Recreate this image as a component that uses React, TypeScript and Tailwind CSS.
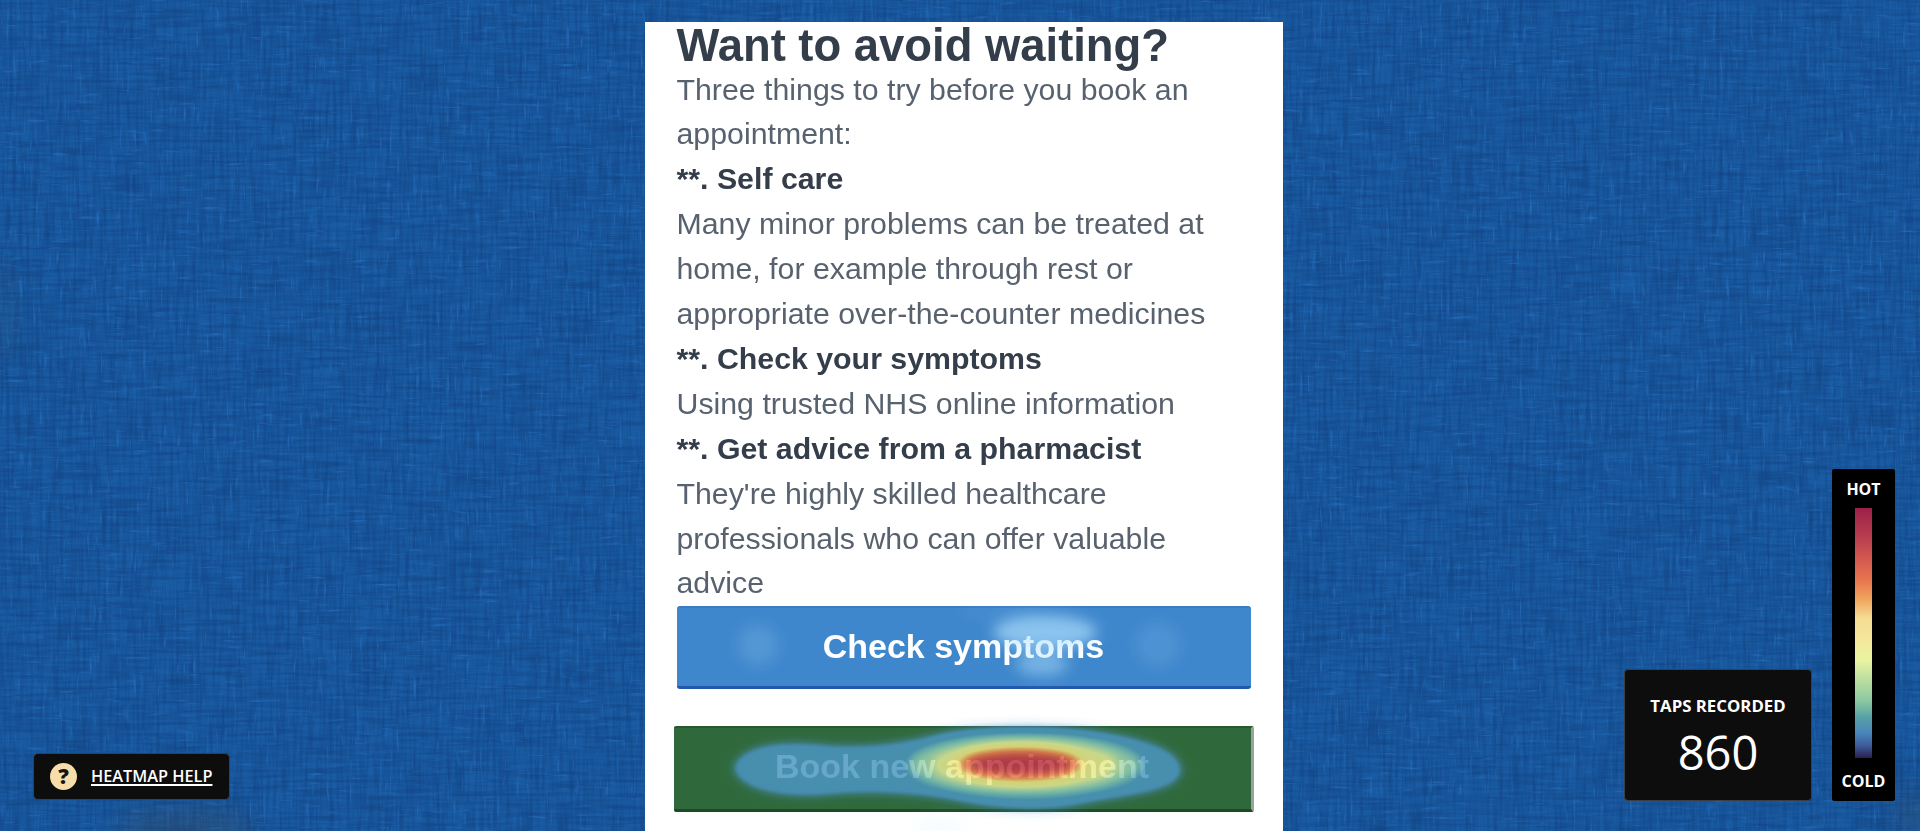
import React from 'react';

/* Heatmap blobs in page coordinates: [cx, cy, rx, ry, strength] */
const lightBlobs: [number, number, number, number, number][] = [
  // Check symptoms button
  [758, 645, 20, 20, 0.06],
  [1158, 645, 22, 22, 0.045],
  [1045, 632, 52, 17, 0.22],
  [1042, 664, 26, 12, 0.16],
  [1000, 612, 40, 4, 0.04],
  // faint spill under the book button
  [940, 826, 26, 10, 0.03],
];

// Book new appointment button, layered from cool to hot
const hotBlobs: [number, number, number, number, number][] = [
  [1025, 765, 118, 31, 0.25],
  [1025, 765, 92, 22, 0.25],
  [1020, 764, 66, 19, 0.3],
  [1020, 764, 56, 13, 0.6],
];

function HeatmapLayer() {
  return (
    <svg className="absolute inset-0 z-20 w-[1920px] h-[831px] pointer-events-none">
      <defs>
        <filter id="heatLight" x="0" y="0" width="1920" height="831" filterUnits="userSpaceOnUse" colorInterpolationFilters="sRGB">
          <feGaussianBlur stdDeviation="7" />
          <feColorMatrix values="0 0 0 1 0  0 0 0 1 0  0 0 0 1 0  0 0 0 1 0" />
          <feComponentTransfer>
            <feFuncR type="table" tableValues="0.7 0.7 0.68 0.68" />
            <feFuncG type="table" tableValues="0.88 0.9 0.95 0.95" />
            <feFuncB type="table" tableValues="1 1 1 1" />
            <feFuncA type="table" tableValues="0 1 1 1" />
          </feComponentTransfer>
        </filter>
        <filter id="heatHot" x="0" y="0" width="1920" height="831" filterUnits="userSpaceOnUse" colorInterpolationFilters="sRGB">
          <feGaussianBlur stdDeviation="6" />
          <feColorMatrix values="0 0 0 1 0  0 0 0 1 0  0 0 0 1 0  0 0 0 1 0" />
          <feComponentTransfer>
            <feFuncR type="table" tableValues="0.3 0.3 0.3 0.3 0.3 0.55 0.9 0.96 0.93 0.74 0.66" />
            <feFuncG type="table" tableValues="0.58 0.58 0.58 0.58 0.6 0.8 0.93 0.9 0.48 0.2 0.1" />
            <feFuncB type="table" tableValues="0.8 0.8 0.8 0.78 0.76 0.72 0.6 0.5 0.3 0.28 0.3" />
            <feFuncA type="table" tableValues="0 0.08 0.3 0.84 0.84 0.84 0.84 0.84 0.86 0.88 0.9" />
          </feComponentTransfer>
        </filter>
      </defs>
      <g filter="url(#heatLight)" fill="#000">
        {lightBlobs.map(([cx, cy, rx, ry, o], i) => (
          <ellipse key={i} cx={cx} cy={cy} rx={rx} ry={ry} fillOpacity={o} />
        ))}
      </g>
      <g filter="url(#heatHot)" fill="#000">
        <path
          fillOpacity="0.36"
          d="M730 768 C740 742 780 738 820 742 C860 746 900 742 940 731 C980 723 1060 722 1110 731 C1150 738 1186 750 1184 772 C1180 796 1120 798 1075 808 C1040 814 1000 812 960 804 C920 796 880 794 840 796 C790 802 740 796 730 768 Z"
        />
        {hotBlobs.map(([cx, cy, rx, ry, o], i) => (
          <ellipse key={i} cx={cx} cy={cy} rx={rx} ry={ry} fillOpacity={o} />
        ))}
      </g>
    </svg>
  );
}

function LinenTexture() {
  return (
    <svg className="absolute inset-0 w-[1920px] h-[831px] pointer-events-none">
      <defs>
        <filter id="warpDark" x="0" y="0" width="100%" height="100%" colorInterpolationFilters="sRGB">
          <feTurbulence type="fractalNoise" baseFrequency="0.3 0.02" numOctaves="2" seed="4" />
          <feColorMatrix values="0 0 0 0 0.07  0 0 0 0 0.25  0 0 0 0 0.5  1.2 0 0 0 -0.45" />
          <feGaussianBlur stdDeviation="0.7" />
        </filter>
        <filter id="weftDark" x="0" y="0" width="100%" height="100%" colorInterpolationFilters="sRGB">
          <feTurbulence type="fractalNoise" baseFrequency="0.02 0.3" numOctaves="2" seed="9" />
          <feColorMatrix values="0 0 0 0 0.07  0 0 0 0 0.25  0 0 0 0 0.5  1.2 0 0 0 -0.45" />
          <feGaussianBlur stdDeviation="0.7" />
        </filter>
        <filter id="warpLight" x="0" y="0" width="100%" height="100%" colorInterpolationFilters="sRGB">
          <feTurbulence type="fractalNoise" baseFrequency="0.3 0.04" numOctaves="2" seed="12" />
          <feColorMatrix values="0 0 0 0 0.16  0 0 0 0 0.44  0 0 0 0 0.75  2.6 0 0 0 -1.65" />
          <feGaussianBlur stdDeviation="0.7" />
        </filter>
        <filter id="weftLight" x="0" y="0" width="100%" height="100%" colorInterpolationFilters="sRGB">
          <feTurbulence type="fractalNoise" baseFrequency="0.04 0.3" numOctaves="2" seed="21" />
          <feColorMatrix values="0 0 0 0 0.16  0 0 0 0 0.44  0 0 0 0 0.75  2.6 0 0 0 -1.65" />
          <feGaussianBlur stdDeviation="0.7" />
        </filter>
        <filter id="soft">
          <feGaussianBlur stdDeviation="14" />
        </filter>
      </defs>
      <rect width="1920" height="831" filter="url(#warpDark)" />
      <rect width="1920" height="831" filter="url(#weftDark)" />
      <rect width="1920" height="831" filter="url(#warpLight)" />
      <rect width="1920" height="831" filter="url(#weftLight)" />
      <g filter="url(#soft)" fill="#3a4a5c">
        <ellipse cx="185" cy="830" rx="70" ry="22" fillOpacity="0.4" />
        <ellipse cx="2" cy="310" rx="10" ry="60" fillOpacity="0.2" />
        <ellipse cx="1915" cy="815" rx="20" ry="30" fillOpacity="0.3" />
      </g>
    </svg>
  );
}

function Heading({ children }: { children: React.ReactNode }) {
  return <p className="font-bold text-[#343d4a]">{children}</p>;
}

function Body({ children }: { children: React.ReactNode }) {
  return <p className="text-[#58626f]">{children}</p>;
}

function ArticlePanel() {
  return (
    <div className="relative ml-[645px] mt-[22px] h-[809px] w-[638px] bg-white pl-[31.5px] font-['Liberation_Sans',Arial,sans-serif] blur-[0.5px]">
      <div className="w-[574px] text-[30.3px] leading-[44.9px]">
        <h1 className="pt-[2px] text-[45.4px] font-bold leading-[43.5px] text-[#343d4a]">Want to avoid waiting?</h1>
        <Body>Three things to try before you book an appointment:</Body>
        <Heading>**. Self care</Heading>
        <Body>Many minor problems can be treated at home, for example through rest or appropriate over-the-counter medicines</Body>
        <Heading>**. Check your symptoms</Heading>
        <Body>Using trusted NHS online information</Body>
        <Heading>**. Get advice from a pharmacist</Heading>
        <Body>They're highly skilled healthcare professionals who can offer valuable advice</Body>
        <button className="flex h-[83px] w-[574px] items-center justify-center rounded-[3px] border-t-2 border-b-[3px] border-t-[#3a7cc0] border-b-[#2257ae] bg-[#3f87cc] pb-[2px] text-[34px] font-bold text-white">
          Check symptoms
        </button>
        <button className="-ml-[3px] mt-[37px] flex h-[86px] w-[580px] items-center justify-center rounded-[2px] border-t-2 border-r-[3px] border-b-[3px] border-t-[#285a30] border-r-[#9aa39a] border-b-[#1d4a25] bg-[#2f683a] pb-[4px] text-[34px] font-bold text-[#f4f8f4]">
          Book new appointment
        </button>
      </div>
    </div>
  );
}

function HeatScale() {
  return (
    <div className="absolute left-[1832px] top-[469px] z-30 flex h-[332px] w-[63px] flex-col items-center rounded-[2px] bg-black font-['Open_Sans',sans-serif] text-[16px] font-bold text-white">
      <span className="mt-[10px] leading-[20px]">HOT</span>
      <div className="mt-[9px] h-[250px] w-[17px] bg-[linear-gradient(to_bottom,#9c2149_0%,#b53c50_11%,#d2574f_20%,#e8764e_29%,#f0a860_37%,#f6dc92_44%,#f4e89c_53%,#e8f4a0_61%,#bfe0a0_68%,#8cc9a0_77%,#55a0a8_84%,#4a85bb_90%,#3e5c9a_95%,#2a1f50_100%)]" />
      <span className="mt-[13px] leading-[20px]">COLD</span>
    </div>
  );
}

function TapsRecorded() {
  return (
    <div className="absolute left-[1624px] top-[669px] z-30 flex h-[132px] w-[188px] flex-col items-center rounded-[4px] border border-[#3a3f46] bg-[#0d0d0d] pt-[25px] font-['Open_Sans',sans-serif] text-white">
      <span className="text-[16.8px] font-bold leading-[22px]">TAPS RECORDED</span>
      <span className="mt-[5px] text-[47px] leading-[60px]">860</span>
    </div>
  );
}

function HelpButton() {
  return (
    <div className="absolute left-[33px] top-[753px] z-30 flex h-[47px] w-[197px] items-center rounded-[5px] border border-[#3a3f46] bg-[#0d0d0d] pl-[16px] font-['Open_Sans',sans-serif]">
      <span className="flex h-[27px] w-[27px] items-center justify-center rounded-full bg-[#f8dcaa] text-[21px] font-extrabold text-[#141414]">?</span>
      <span className="ml-[14px] text-[16.3px] font-semibold text-white underline decoration-2 underline-offset-2">HEATMAP HELP</span>
    </div>
  );
}

export default function App() {
  return (
    <div className="relative h-[831px] w-[1920px] overflow-hidden bg-[#1a5ca3]">
      <LinenTexture />
      <div className="flow-root">
        <ArticlePanel />
      </div>
      <HeatmapLayer />
      <HelpButton />
      <TapsRecorded />
      <HeatScale />
    </div>
  );
}
